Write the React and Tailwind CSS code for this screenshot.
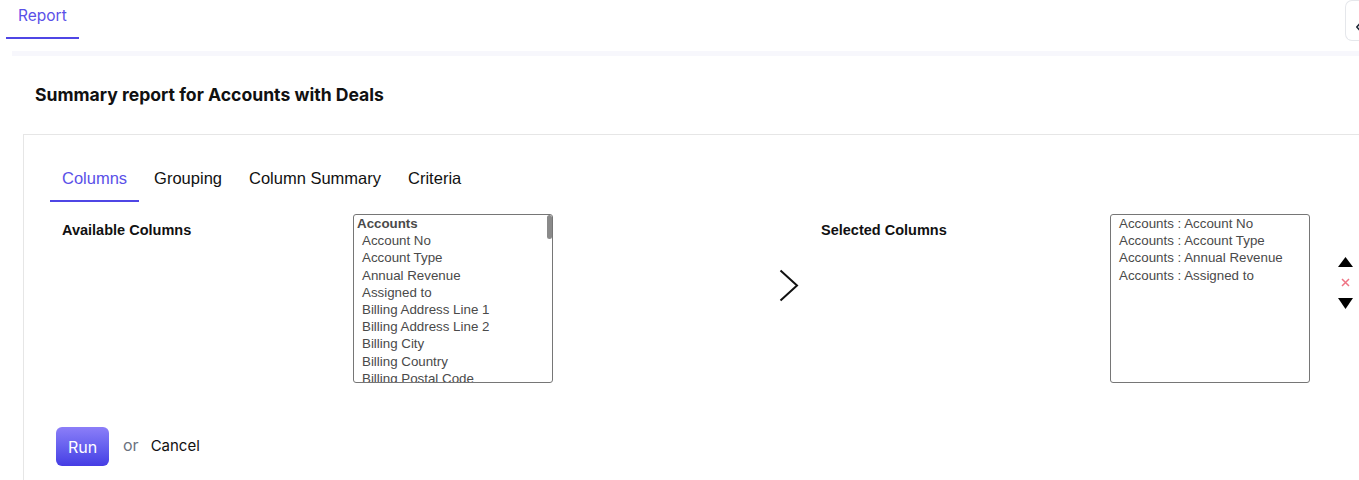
import React from 'react'

const available = [
    'Account No',
    'Account Type',
    'Annual Revenue',
    'Assigned to',
    'Billing Address Line 1',
    'Billing Address Line 2',
    'Billing City',
    'Billing Country',
    'Billing Postal Code',
];

const selected = [
    'Accounts : Account No',
    'Accounts : Account Type',
    'Accounts : Annual Revenue',
    'Accounts : Assigned to',
];

const tabs = ['Columns', 'Grouping', 'Column Summary', 'Criteria'];

const arial = { fontFamily: '"Liberation Sans", Arial, sans-serif' };

const App = () => {
    return (
        <div className="w-full h-[480px] overflow-hidden bg-white font-['Inter',sans-serif]">
            {/* top nav */}
            <div className="flex items-start h-[41px] pl-[6px]">
                <div className="h-[39px] px-3 pt-[6px] border-b-2 border-[#4f46e5] text-[15.5px] leading-5 text-[#5a50e8]">
                    Report
                </div>
                <div className="ml-auto h-[41px] w-[14px] border border-r-0 border-[#e5e7eb] rounded-l-[7px] pl-[10px] pt-[22px]">
                    <svg width="4" height="8" viewBox="0 0 4 8">
                        <path d="M3.5 1 L0.8 4 L3.5 7" fill="none" stroke="#1f2937" strokeWidth="1.6" />
                    </svg>
                </div>
            </div>

            <div className="mt-[10px] ml-[12px] h-[5px] bg-[#f7f7fc]" />

            <div className="ml-[12px] pt-[27px]">
                <h1 className="pl-[23px] text-[17.6px] leading-[24px] font-bold text-[#111]">
                    Summary report for Accounts with Deals
                </h1>

                <div className="mt-[27px] ml-[11px] border-t border-l border-[#e6e6e6] pt-[31px] h-[400px]">
                    {/* tabs */}
                    <div className="flex gap-[3px] pl-[26px]" style={arial}>
                        {tabs.map((t, idx) => (
                            <div
                                key={t}
                                className={`h-[36px] px-3 text-[16.5px] leading-[24px] border-b-2 ${idx === 0 ? 'border-[#4f46e5] text-[#5a50e8]' : 'border-transparent text-[#111]'}`}
                            >
                                {t}
                            </div>
                        ))}
                    </div>

                    {/* columns picker */}
                    <div className="flex items-start mt-[12px] pl-[38px]" style={arial}>
                        <div className="w-[291px] mt-[6px] text-[14.5px] leading-5 font-bold text-[#111]">
                            Available Columns
                        </div>
                        <div className="relative w-[200px] h-[169px] border border-[#767676] rounded-[3px] overflow-hidden text-[13.33px] leading-[17.2px] text-[#4a4a4a]">
                            <div className="pl-[3px] font-bold">Accounts</div>
                            {available.map((c) => (
                                <div key={c} className="pl-[8px] whitespace-nowrap">{c}</div>
                            ))}
                            <div className="absolute right-0 top-0 w-[5px] h-[24px] rounded-[3px] bg-[#8a8a8a]" />
                        </div>

                        <div className="w-[226px]" />
                        <div className="mt-[55px]">
                            <svg width="20" height="33" viewBox="0 0 20 33">
                                <path d="M1.5 1.5 L18 16.5 L1.5 31.5" fill="none" stroke="#111" strokeWidth="2" />
                            </svg>
                        </div>
                        <div className="w-[22px]" />

                        <div className="w-[289px] mt-[6px] text-[14.5px] leading-5 font-bold text-[#111]">
                            Selected Columns
                        </div>
                        <div className="w-[200px] h-[169px] border border-[#767676] rounded-[3px] overflow-hidden text-[13.33px] leading-[17.2px] text-[#4a4a4a] pl-[8px]">
                            {selected.map((c) => (
                                <div key={c} className="whitespace-nowrap">{c}</div>
                            ))}
                        </div>

                        <div className="ml-[28px] mt-[43px] flex flex-col items-center w-[15px]">
                            <svg width="15" height="10" viewBox="0 0 15 10">
                                <path d="M7.5 0 L15 10 L0 10 Z" fill="#000" />
                            </svg>
                            <svg className="mt-[11px]" width="9" height="9" viewBox="0 0 9 9">
                                <path d="M1 1 L8 8 M8 1 L1 8" stroke="#ef7484" strokeWidth="1.5" />
                            </svg>
                            <svg className="mt-[11px]" width="15" height="11" viewBox="0 0 15 11">
                                <path d="M0 0 L15 0 L7.5 11 Z" fill="#000" />
                            </svg>
                        </div>
                    </div>

                    {/* actions */}
                    <div className="flex items-center mt-[44px] pl-[32px]">
                        <button className="w-[53px] h-[39px] rounded-[6px] bg-linear-to-b from-[#8c7ef8] to-[#463ce4] text-white text-[16px] font-normal">
                            Run
                        </button>
                        <span className="ml-[14px] text-[16px] text-[#6b7280] -mt-[4px]">or</span>
                        <span className="ml-[12px] text-[15px] text-[#111]">Cancel</span>
                    </div>
                </div>
            </div>
        </div>
    )
}

export default App
